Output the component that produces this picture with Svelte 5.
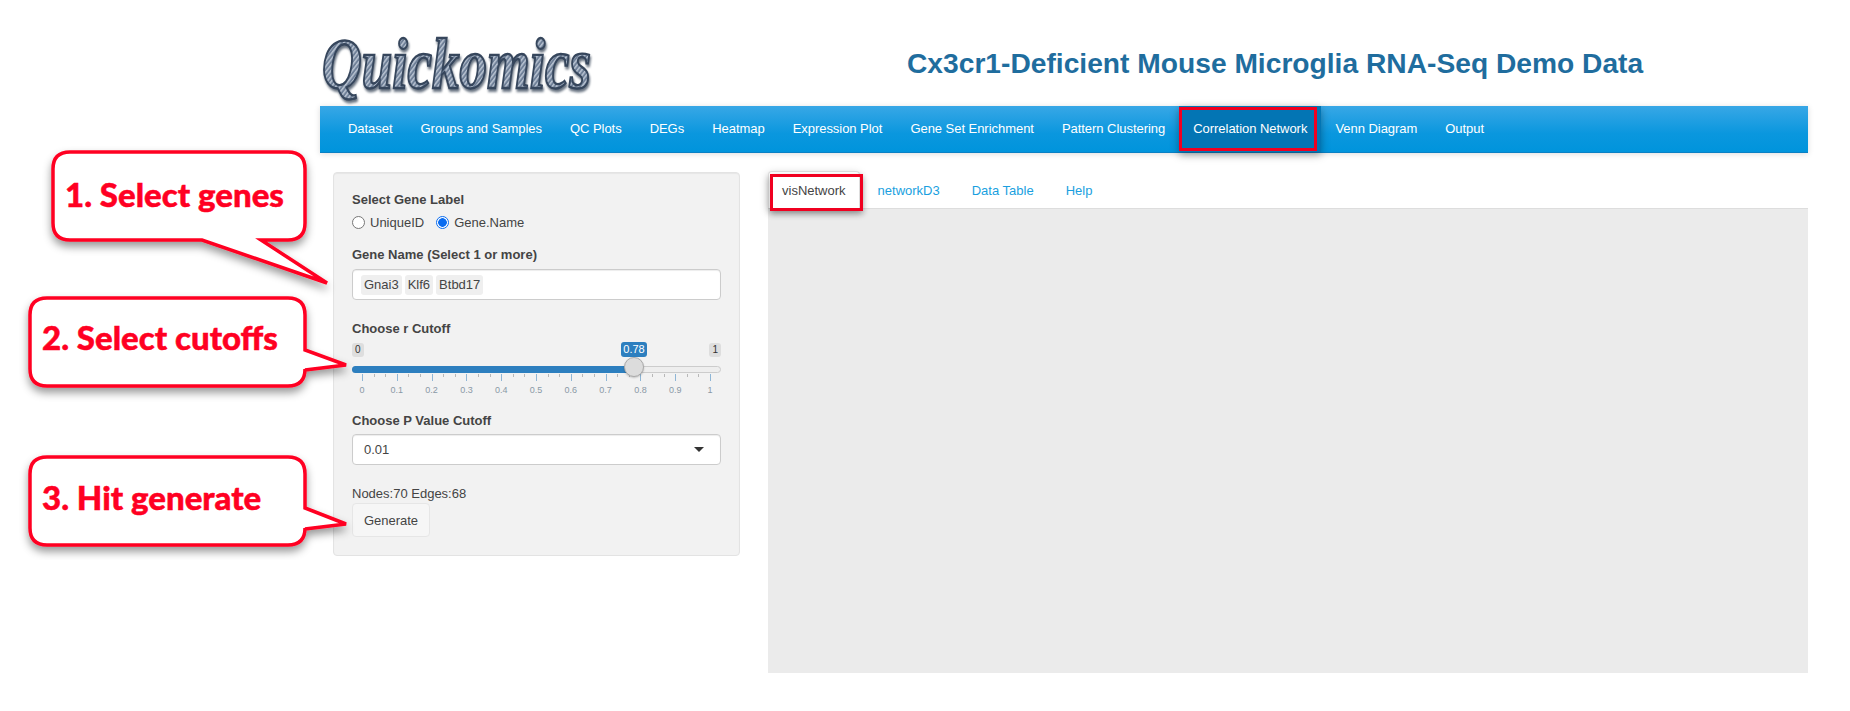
<script>
	const navItems = ['Dataset', 'Groups and Samples', 'QC Plots', 'DEGs', 'Heatmap', 'Expression Plot', 'Gene Set Enrichment', 'Pattern Clustering', 'Correlation Network', 'Venn Diagram', 'Output'];
	const tabs = ['visNetwork', 'networkD3', 'Data Table', 'Help'];
	const genes = ['Gnai3', 'Klf6', 'Btbd17'];
	const gridLabels = ['0', '0.1', '0.2', '0.3', '0.4', '0.5', '0.6', '0.7', '0.8', '0.9', '1'];
	const minorTicks = [1, 2, 4, 5, 7, 8, 10, 11, 13, 14, 16, 17, 19, 20, 22, 23, 25, 26, 28, 29];

	// callouts sit over the page, each one is a bubble path plus its label
	const callouts = [
		{ text: '1. Select genes', x: 65, y: 207, d: 'M70 152H288Q305 152 305 169V223Q305 240 288 240H261L327 283L202 240H70Q53 240 53 223V169Q53 152 70 152Z' },
		{ text: '2. Select cutoffs', x: 42, y: 350, d: 'M47 298H288Q305 298 305 315V350L346 365L305 370V369Q305 386 288 386H47Q30 386 30 369V315Q30 298 47 298Z' },
		{ text: '3. Hit generate', x: 42, y: 510, d: 'M47 457H288Q305 457 305 474V508L346 524L305 529V528Q305 545 288 545H47Q30 545 30 528V474Q30 457 47 457Z' }
	];
</script>

<div class="page">
	<header class="top">
		<svg class="logo" width="290" height="84" viewBox="0 0 290 84">
			<defs>
				<pattern id="weave" width="3" height="3" patternUnits="userSpaceOnUse" patternTransform="rotate(45)">
					<rect width="3" height="3" fill="#6f8098" />
					<rect width="1.3" height="3" fill="#b9c3d1" />
				</pattern>
			</defs>
			<text x="3" y="49" transform="scale(1 1.31)" class="logo-text">Quickomics</text>
		</svg>
		<h1>Cx3cr1-Deficient Mouse Microglia RNA-Seq Demo Data</h1>
	</header>

	<nav class="navbar">
		{#each navItems as item}
			<a href="#top" class:active={item === 'Correlation Network'}>{item}</a>
		{/each}
	</nav>

	<main class="content">
		<aside class="well">
			<div class="label first">Select Gene Label</div>
			<div class="radios">
				<span class="radio"><i class="dot"></i>UniqueID</span>
				<span class="radio"><i class="dot on"></i>Gene.Name</span>
			</div>

			<div class="label gene-label">Gene Name (Select 1 or more)</div>
			<div class="input chips">
				{#each genes as gene}
					<span class="chip">{gene}</span>
				{/each}
			</div>

			<div class="label r-label">Choose r Cutoff</div>
			<div class="slider">
				<div class="ends">
					<span class="end">0</span>
					<span class="end">1</span>
				</div>
				<div class="track">
					<div class="fill"></div>
				</div>
				<div class="grid">
					{#each gridLabels as label, i}
						<span class="major" style="left: {(i * 10)}%"></span>
						<span class="tick-label" style="left: {(i * 10)}%">{label}</span>
					{/each}
					{#each minorTicks as t}
						<span class="minor" style="left: {(t / 30) * 100}%"></span>
					{/each}
				</div>
				<span class="value">0.78</span>
				<span class="handle"></span>
			</div>

			<div class="label p-label">Choose P Value Cutoff</div>
			<div class="input select">
				<span>0.01</span>
				<i class="caret"></i>
			</div>

			<div class="counts">Nodes:70 Edges:68</div>
			<button class="btn">Generate</button>
		</aside>

		<section class="main-panel">
			<ul class="tabs">
				{#each tabs as tab, i}
					<li class:current={i === 0}>{tab}</li>
				{/each}
			</ul>
			<div class="canvas"></div>
		</section>
	</main>

	<div class="mark nav-mark"></div>
	<div class="mark tab-mark"></div>

	<svg class="callouts" width="360" height="560" viewBox="0 0 360 560">
		<defs>
			<filter id="drop" x="-10%" y="-10%" width="125%" height="130%">
				<feDropShadow dx="0" dy="5" stdDeviation="4" flood-color="#000" flood-opacity="0.4" />
			</filter>
		</defs>
		{#each callouts as c}
			<path d={c.d} fill="#fff" stroke="#ff0022" stroke-width="3.5" stroke-linejoin="miter" filter="url(#drop)" />
			<text x={c.x} y={c.y} class="callout-text">{c.text}</text>
		{/each}
	</svg>
</div>

<style>
	:global(body) {
		margin: 0;
		background: #fff;
	}

	.page {
		position: relative;
		width: 1850px;
		height: 711px;
		overflow: hidden;
		font-family: 'Liberation Sans', Arial, sans-serif;
		font-size: 13px;
		color: #444;
	}

	.top {
		display: flex;
		align-items: flex-start;
		height: 106px;
		padding-left: 319px;
	}

	.logo {
		margin-top: 24px;
		flex: none;
		overflow: visible;
	}

	.logo-text {
		font-family: 'Liberation Serif', serif;
		font-style: italic;
		font-weight: 700;
		font-size: 55px;
		fill: url(#weave);
		stroke: #36465c;
		stroke-width: 1.8px;
		filter: drop-shadow(1px 2px 1px rgba(40, 55, 75, 0.7));
	}

	h1 {
		margin: 47px 0 0 298px;
		font-size: 28.2px;
		line-height: 32px;
		font-weight: 700;
		color: #1f6d9e;
		white-space: nowrap;
	}

	.navbar {
		display: flex;
		width: 1488px;
		height: 47px;
		margin-left: 320px;
		padding-left: 14px;
		background: linear-gradient(#38a7e6, #0a97de 60%, #0094dc);
		border-bottom: 1px solid #0a80c4;
		box-sizing: border-box;
		box-shadow: 0 1px 6px rgba(0, 0, 0, 0.14);
	}

	.navbar a {
		padding: 0 14px;
		line-height: 46px;
		color: #fff;
		text-decoration: none;
		white-space: nowrap;
		letter-spacing: -0.04px;
	}

	.navbar a.active {
		background: #0375b4;
		box-shadow: 0 3px 8px rgba(0, 0, 0, 0.35);
	}

	.content {
		display: flex;
		padding: 19px 0 0 333px;
	}

	.well {
		width: 407px;
		height: 384px;
		box-sizing: border-box;
		padding: 19px 18px;
		background: #f2f2f2;
		border: 1px solid #e3e3e3;
		border-radius: 4px;
		box-shadow: inset 0 1px 1px rgba(0, 0, 0, 0.05);
	}

	.label {
		font-weight: 700;
		line-height: 15px;
		color: #444;
	}

	.radios {
		display: flex;
		gap: 12px;
		margin-top: 8px;
		line-height: 15px;
	}

	.radio {
		display: flex;
		align-items: center;
		gap: 5px;
	}

	.dot {
		width: 11px;
		height: 11px;
		border: 1px solid #777;
		border-radius: 50%;
		background: #fff;
		box-sizing: content-box;
	}

	.dot.on {
		border-color: #0a6cf0;
		background: radial-gradient(circle, #0a6cf0 0 4px, #fff 4.6px);
	}

	.gene-label {
		margin-top: 17px;
	}

	.input {
		display: flex;
		align-items: center;
		height: 31px;
		box-sizing: border-box;
		margin-top: 7px;
		background: #fff;
		border: 1px solid #ccc;
		border-radius: 4px;
		box-shadow: inset 0 1px 1px rgba(0, 0, 0, 0.075);
		color: #444;
	}

	.chips {
		gap: 3px;
		padding-left: 8px;
	}

	.chip {
		padding: 0 3px;
		line-height: 20px;
		background: #efefef;
		border-radius: 3px;
	}

	.r-label {
		margin-top: 21px;
	}

	.slider {
		position: relative;
		width: 369px;
		height: 62px;
		margin-top: 6px;
	}

	.ends {
		display: flex;
		justify-content: space-between;
		padding-top: 1px;
	}

	.end {
		padding: 0 3px;
		font-size: 10px;
		line-height: 14px;
		background: #dedede;
		border-radius: 3px;
		color: #333;
	}

	.track {
		position: relative;
		height: 7px;
		margin-top: 9px;
		background: #eee;
		border: 1px solid #ccc;
		border-radius: 4px;
		box-sizing: border-box;
	}

	.fill {
		position: absolute;
		left: -1px;
		top: -1px;
		bottom: -1px;
		width: 282px;
		background: #2d7fbf;
		border-radius: 4px 0 0 4px;
	}

	.grid {
		position: relative;
		width: 348px;
		height: 30px;
		margin: 1px 0 0 10px;
	}

	.major,
	.minor {
		position: absolute;
		top: 0;
		width: 1px;
		height: 7px;
		background: #8fb6d6;
	}

	.minor {
		height: 3px;
		background: #b8b8b8;
	}

	.tick-label {
		position: absolute;
		top: 11px;
		transform: translateX(-50%);
		font-size: 9px;
		line-height: 11px;
		color: #8a99a6;
	}

	.value {
		position: absolute;
		left: 269px;
		top: 0;
		width: 26px;
		text-align: center;
		font-size: 11px;
		line-height: 15px;
		color: #fff;
		background: #2d7fbf;
		border-radius: 3px;
	}

	.handle {
		position: absolute;
		left: 272px;
		top: 15px;
		width: 20px;
		height: 20px;
		box-sizing: border-box;
		background: #dcdcdc;
		border: 1px solid #aaa;
		border-radius: 50%;
		box-shadow: 0 1px 2px rgba(0, 0, 0, 0.2);
	}

	.p-label {
		margin-top: 9px;
	}

	.select {
		justify-content: space-between;
		margin-top: 6px;
		padding: 0 16px 0 11px;
	}

	.caret {
		width: 0;
		height: 0;
		border: 5px solid transparent;
		border-top-color: #333;
		border-bottom: 0;
	}

	.counts {
		margin-top: 21px;
		line-height: 15px;
	}

	.btn {
		display: block;
		width: 78px;
		height: 34px;
		margin-top: 2px;
		padding: 0;
		font: inherit;
		color: #444;
		background: #f6f6f6;
		border: 1px solid #e6e6e6;
		border-radius: 4px;
	}

	.main-panel {
		width: 1040px;
		margin-left: 28px;
		margin-top: -1px;
	}

	.tabs {
		display: flex;
		gap: 4px;
		height: 38px;
		margin: 0;
		padding: 0;
		box-sizing: border-box;
		list-style: none;
		border-bottom: 1px solid #ddd;
	}

	.tabs li {
		padding: 0 13px;
		line-height: 38px;
		color: #1a9fe0;
		border: 1px solid transparent;
		border-bottom: 0;
		height: 37px;
		box-sizing: border-box;
	}

	.tabs li.current {
		color: #444;
		background: #fff;
		border-color: #ddd;
		border-radius: 4px 4px 0 0;
		box-shadow: 0 3px 8px rgba(0, 0, 0, 0.25);
	}

	.canvas {
		height: 464px;
		background: #ebebeb;
	}

	/* red highlight boxes drawn on top of the screenshot */
	.mark {
		position: absolute;
		box-sizing: border-box;
		border: 3px solid #f00020;
	}

	.nav-mark {
		left: 1179px;
		top: 107px;
		width: 138px;
		height: 44px;
	}

	.tab-mark {
		left: 770px;
		top: 174px;
		width: 93px;
		height: 37px;
		box-shadow: 0 3px 6px rgba(0, 0, 0, 0.3);
	}

	.callouts {
		position: absolute;
		left: 0;
		top: 0;
	}

	.callout-text {
		font-family: Lato, 'Open Sans', sans-serif;
		font-weight: 900;
		font-size: 33px;
		fill: #ff0022;
		stroke: #ff0022;
		stroke-width: 0.5px;
	}
</style>
